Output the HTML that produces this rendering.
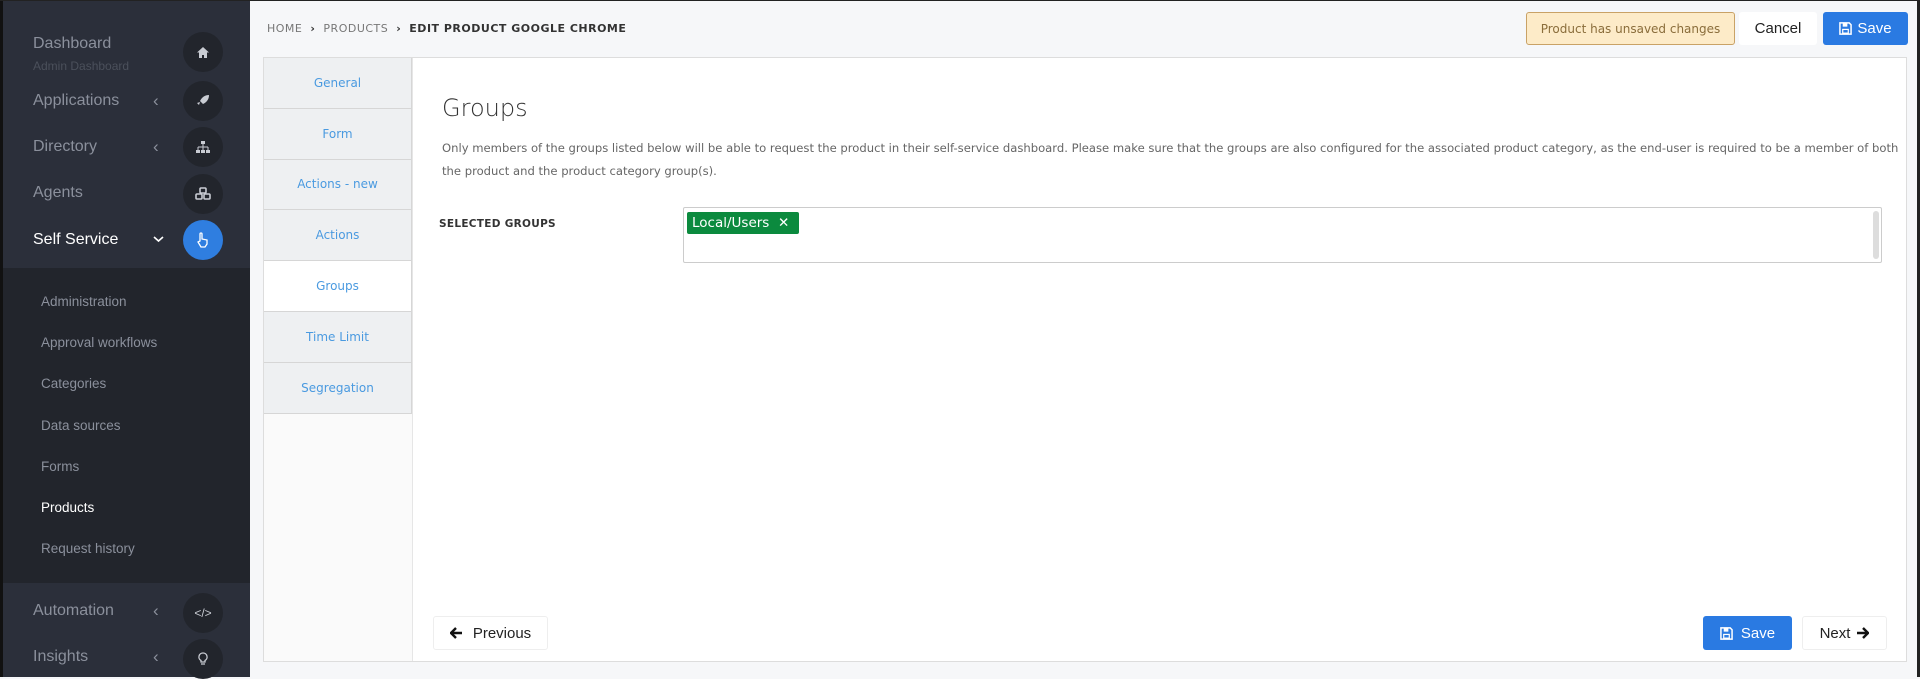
<!DOCTYPE html>
<html><head><meta charset="utf-8"><style>
*{box-sizing:border-box;margin:0;padding:0}
body{width:1920px;height:677px;overflow:hidden;background:#f6f7f9;font-family:"Liberation Sans",sans-serif;position:relative}
.sb{position:absolute;left:0;top:0;width:250px;height:677px;background:#2b2f3a;border-left:3px solid #111}
.sub{position:absolute;left:0;top:268px;width:247px;height:315px;background:#22252c}
.it{position:absolute;left:30px;color:#8b909c;font-size:16px}
.circ{position:absolute;left:180px;width:40px;height:40px;border-radius:50%;background:#22252c;display:flex;align-items:center;justify-content:center;color:#c9ccd3}
.chev{position:absolute;left:150px;color:#8b909c;font-size:17px}
.si{position:absolute;left:38px;color:#8b909c;font-size:13.5px}
.bc{position:absolute;top:22px;left:267px;font-family:"DejaVu Sans",sans-serif;font-size:11px;color:#777;letter-spacing:.5px}
.bc b{color:#333;font-weight:bold}
.panel{position:absolute;left:263px;top:57px;width:1644px;height:605px;background:#fff;border:1px solid #ddd}
.left{position:absolute;left:0;top:0;width:149px;height:603px;background:#fafafa;border-right:1px solid #e6e6e6}
.tab{height:50.8px;border-bottom:1px solid #d6d6d6;border-right:1px solid #d6d6d6;background:#eef0f2;color:#4a9ae0;font-size:12px;display:flex;align-items:center;justify-content:center;font-family:"DejaVu Sans",sans-serif}
.tab.act{background:#fff}
.btn{position:absolute;border-radius:3px;display:flex;align-items:center;justify-content:center;font-size:15px;white-space:nowrap}
</style></head><body>
<div class="sb">
<div class="sub"></div>
<div class="it" style="top:35px;color:#8b909c">Dashboard</div>
<div class="it" style="top:59px;font-size:12px;color:#4b505b">Admin Dashboard</div>
<div class="circ" style="top:32px"><svg width="14" height="13" viewBox="0 0 14 13"><path d="M7 1L1 6.5h2V12h3V9h2v3h3V6.5h2z" fill="#c9ccd3"/></svg></div>
<div class="it" style="top:92px">Applications</div><div class="chev" style="top:91px">&lsaquo;</div>
<div class="circ" style="top:81px"><svg width="14" height="14" viewBox="0 0 14 14"><path d="M13 1C9 1 6 3 4 7l3 3c4-2 6-5 6-9zM4 8l-3 1 2 2zM2 12l2-1" fill="#c9ccd3"/></svg></div>
<div class="it" style="top:138px">Directory</div><div class="chev" style="top:137px">&lsaquo;</div>
<div class="circ" style="top:127px"><svg width="16" height="14" viewBox="0 0 16 14"><rect x="6" y="1" width="4" height="3" fill="#c9ccd3"/><path d="M8 4v3M3 7h10M3 7v3M8 7v3M13 7v3" stroke="#c9ccd3"/><rect x="1" y="10" width="4" height="3" fill="#c9ccd3"/><rect x="6" y="10" width="4" height="3" fill="#c9ccd3"/><rect x="11" y="10" width="4" height="3" fill="#c9ccd3"/></svg></div>
<div class="it" style="top:184px">Agents</div>
<div class="circ" style="top:174px"><svg width="16" height="14" viewBox="0 0 16 14"><rect x="5" y="1" width="6" height="5" rx="1" fill="none" stroke="#c9ccd3" stroke-width="1.6"/><rect x="1" y="7" width="6" height="5" rx="1" fill="none" stroke="#c9ccd3" stroke-width="1.6"/><rect x="9" y="7" width="6" height="5" rx="1" fill="none" stroke="#c9ccd3" stroke-width="1.6"/></svg></div>
<div class="it" style="top:231px;color:#fff">Self Service</div>
<svg style="position:absolute;left:150px;top:235px" width="11" height="8" viewBox="0 0 11 8"><path d="M1 2l4.5 4L10 2" stroke="#fff" stroke-width="1.6" fill="none"/></svg>
<div class="circ" style="top:220px;background:#2f7ee0"><svg width="14" height="16" viewBox="0 0 14 16"><path d="M4 9V2a1 1 0 012 0v5l5 1v4l-2 3H5L2 10z" fill="none" stroke="#fff" stroke-width="1.3"/></svg></div>
<div class="si" style="top:294px">Administration</div>
<div class="si" style="top:335px">Approval workflows</div>
<div class="si" style="top:376px">Categories</div>
<div class="si" style="top:418px">Data sources</div>
<div class="si" style="top:459px">Forms</div>
<div class="si" style="top:500px;color:#fff">Products</div>
<div class="si" style="top:541px">Request history</div>
<div class="it" style="top:602px">Automation</div><div class="chev" style="top:601px">&lsaquo;</div>
<div class="circ" style="top:593px;font-size:12px">&lt;/&gt;</div>
<div class="it" style="top:648px">Insights</div><div class="chev" style="top:647px">&lsaquo;</div>
<div class="circ" style="top:639px"><svg width="10" height="14" viewBox="0 0 10 14"><path d="M5 1a4 4 0 00-2 7.5V10h4V8.5A4 4 0 005 1zM3 12h4" fill="none" stroke="#c9ccd3" stroke-width="1.3"/></svg></div>
</div>
<div style="position:absolute;right:0;top:0;width:3px;height:677px;background:#222"></div>
<div style="position:absolute;left:0;top:0;width:1920px;height:1px;background:#222"></div>
<div class="bc">HOME &nbsp;<b>›</b>&nbsp; PRODUCTS &nbsp;<b>›</b>&nbsp; <b>EDIT PRODUCT GOOGLE CHROME</b></div>
<div class="btn" style="left:1526px;top:12px;width:209px;height:33px;background:#fdebc8;border:1px solid #c9a266;color:#8a6d3b;font-size:12px;font-family:'DejaVu Sans',sans-serif">Product has unsaved changes</div>
<div class="btn" style="left:1739px;top:12px;width:78px;height:33px;background:#fff;color:#222">Cancel</div>
<div class="btn" style="left:1823px;top:12px;width:85px;height:33px;background:#2a7ae2;color:#fff"><svg width="13" height="13" viewBox="0 0 14 14" style="margin-right:5px"><path d="M1 1h10l2 2v10H1z" fill="none" stroke="#fff" stroke-width="1.6"/><rect x="4" y="1.5" width="5" height="3.5" fill="#fff"/><rect x="4" y="8" width="6" height="4" fill="none" stroke="#fff" stroke-width="1.3"/></svg>Save</div>
<div class="panel">
<div class="left">
<div class="tab">General</div><div class="tab">Form</div><div class="tab">Actions - new</div><div class="tab">Actions</div><div class="tab act">Groups</div><div class="tab">Time Limit</div><div class="tab">Segregation</div>
</div>
<div style="position:absolute;left:178px;top:36px;font-size:24px;color:#333;font-family:'DejaVu Sans',sans-serif;font-weight:300">Groups</div>
<div style="position:absolute;left:178px;top:79px;width:1460px;font-size:11.6px;line-height:23px;color:#666;font-family:'DejaVu Sans',sans-serif">Only members of the groups listed below will be able to request the product in their self-service dashboard. Please make sure that the groups are also configured for the associated product category, as the end-user is required to be a member of both the product and the product category group(s).</div>
<div style="position:absolute;left:175px;top:160px;font-size:10.5px;font-weight:bold;color:#333;font-family:'DejaVu Sans',sans-serif;letter-spacing:.3px">SELECTED GROUPS</div>
<div style="position:absolute;left:419px;top:149px;width:1199px;height:56px;border:1px solid #ccc;border-radius:2px">
<div style="position:absolute;left:3px;top:4px;width:112px;height:22px;background:#0b8a3e;border-radius:2px;color:#fff;font-size:13.5px;padding:3px 5px;white-space:nowrap;font-family:'DejaVu Sans',sans-serif">Local/Users &nbsp;<b>✕</b></div>
<div style="position:absolute;right:2px;top:3px;width:6px;height:48px;background:#ddd;border-radius:3px"></div>
</div>
<div class="btn" style="left:169px;top:558px;width:115px;height:34px;border:1px solid #eee;background:#fff;color:#222"><svg width="13" height="12" viewBox="0 0 13 12" style="margin-right:10px"><path d="M6 1L1 6l5 5M1 6h11" stroke="#111" stroke-width="2.4" fill="none"/></svg>Previous</div>
<div class="btn" style="left:1439px;top:558px;width:89px;height:34px;background:#2a7ae2;color:#fff"><svg width="13" height="13" viewBox="0 0 14 14" style="margin-right:8px"><path d="M1 1h10l2 2v10H1z" fill="none" stroke="#fff" stroke-width="1.6"/><rect x="4" y="1.5" width="5" height="3.5" fill="#fff"/><rect x="4" y="8" width="6" height="4" fill="none" stroke="#fff" stroke-width="1.3"/></svg>Save</div>
<div class="btn" style="left:1538px;top:558px;width:85px;height:34px;border:1px solid #eee;background:#fff;color:#222">Next<svg width="13" height="12" viewBox="0 0 13 12" style="margin-left:6px"><path d="M7 1l5 5-5 5M12 6H1" stroke="#111" stroke-width="2.4" fill="none"/></svg></div>
</div>
</body></html>
